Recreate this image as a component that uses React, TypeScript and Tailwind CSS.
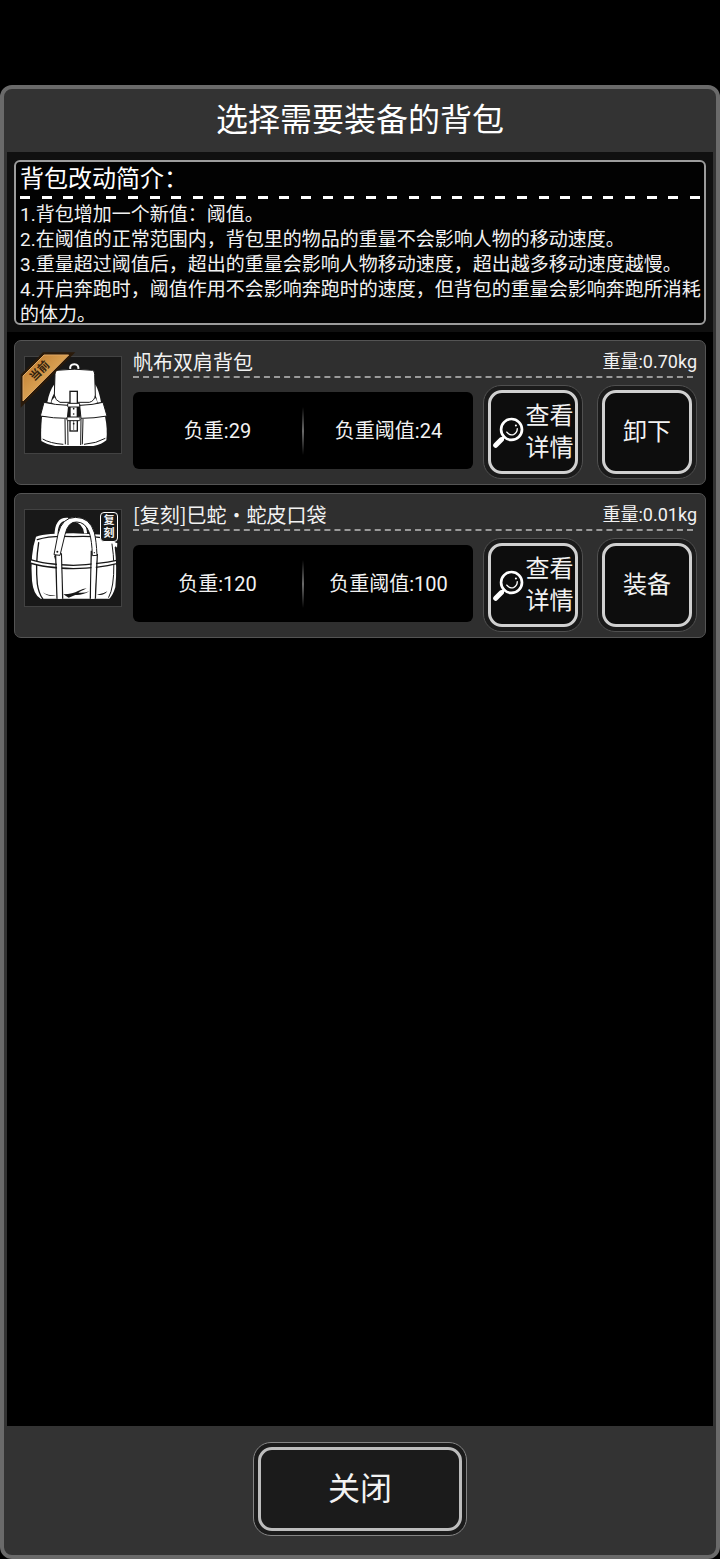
import type { ReactNode } from "react";
import clsx from "clsx";

type Bag = {
  id: string;
  name: string;
  weight: string;
  load: number;
  threshold: number;
  equipped: boolean;
  reissue: boolean;
  art: ReactNode;
};

const NOTES = [
  "1.背包增加一个新值：阈值。",
  "2.在阈值的正常范围内，背包里的物品的重量不会影响人物的移动速度。",
  "3.重量超过阈值后，超出的重量会影响人物移动速度，超出越多移动速度越慢。",
  "4.开启奔跑时，阈值作用不会影响奔跑时的速度，但背包的重量会影响奔跑所消耗的体力。",
];

const BAGS: Bag[] = [
  {
    id: "canvas",
    name: "帆布双肩背包",
    weight: "0.70kg",
    load: 29,
    threshold: 24,
    equipped: true,
    reissue: false,
    art: <BackpackArt />,
  },
  {
    id: "snake",
    name: "[复刻]巳蛇·蛇皮口袋",
    weight: "0.01kg",
    load: 120,
    threshold: 100,
    equipped: false,
    reissue: true,
    art: <DuffelArt />,
  },
];

function BackpackArt() {
  return (
    <svg viewBox="45 68 288 288" className="size-full" aria-hidden="true">
      <path d="M181 106 Q178 90 193 90 Q207 90 205 106" fill="none" stroke="#fff" strokeWidth="6" />
      <path d="M133 150 Q118 170 112 204 L122 205 Q126 185 134 175Z" fill="#fff" />
      <path d="M256 150 Q268 172 273 204 L263 205 Q260 190 255 180Z" fill="#fff" />
      <path d="M124 204 Q128 190 138 188 L252 188 Q260 192 262 204 L250 212 L135 212Z" fill="#fff" />
      <path
        d="M140 108 Q193 101 248 108 Q254 110 254 120 L256 182 Q254 200 238 204 L150 204 Q136 199 133 182 L135 120 Q135 110 140 108Z"
        fill="#fff"
        stroke="#181818"
        strokeWidth="3"
      />
      <path d="M96 248 Q92 290 94 320 Q110 330 136 335 L250 335 Q276 330 289 318 Q293 285 285 246Z" fill="#fff" />
      <path d="M102 204 Q135 212 176 213 L172 252 Q130 252 91 245Z" fill="#fff" stroke="#181818" strokeWidth="3" />
      <path d="M279 204 Q248 212 209 213 L213 252 Q252 252 291 245Z" fill="#fff" stroke="#181818" strokeWidth="3" />
      <g fill="none" stroke="#181818" strokeWidth="3">
        <path d="M165 254 L166 330 M173 254 L174 332 M213 254 L212 332 M219 254 L217 330" />
        <path d="M98 314 Q120 327 160 330 M222 330 Q260 327 286 312" />
      </g>
      <rect x="180" y="171" width="22" height="119" fill="#fff" stroke="#181818" strokeWidth="4" />
      <path d="M191 258 V288" stroke="#777" strokeWidth="3" />
      <rect x="173" y="207" width="36" height="11" rx="2" fill="#fff" stroke="#181818" strokeWidth="3" />
      <rect x="171" y="248" width="39" height="11" rx="2" fill="#fff" stroke="#181818" strokeWidth="3" />
      <path d="M176 218 V248 M207 218 V248" stroke="#181818" strokeWidth="4" />
      <g fill="#181818">
        <circle cx="191" cy="223" r="2.5" />
        <circle cx="191" cy="239" r="2.5" />
        <circle cx="191" cy="268" r="2.5" />
      </g>
    </svg>
  );
}

function DuffelArt() {
  return (
    <svg viewBox="45 68 288 288" className="size-full" aria-hidden="true">
      <path d="M138 146 Q138 92 174 96 M190 97 Q224 104 227 138" fill="none" stroke="#fff" strokeWidth="9" />
      <path
        d="M78 148 Q110 138 190 138 L280 142 Q312 148 318 176 L314 180 Q322 240 316 300 Q308 326 298 334 L92 334 Q70 322 66 280 Q60 200 78 148Z"
        fill="#fff"
      />
      <g fill="none" stroke="#181818" strokeWidth="4" strokeLinecap="round">
        <path d="M82 157 Q120 144 190 148 Q260 144 308 158" />
        <path d="M86 166 Q76 230 82 290 Q86 318 98 334" />
        <path d="M306 170 Q316 235 308 290 Q304 316 296 330" strokeWidth="3" />
      </g>
      <path d="M62 217 Q100 231 190 234 Q270 230 320 219 L320 229 Q270 242 190 244 Q100 241 60 227Z" fill="#fff" stroke="#181818" strokeWidth="4" />
      <path d="M137 200 L141 334 M154 198 L158 334" fill="none" stroke="#181818" strokeWidth="4" />
      <path d="M140 204 H153 L155 334 H144Z" fill="#fff" />
      <path d="M244 190 L241 334 M262 200 L256 334" fill="none" stroke="#181818" strokeWidth="4" />
      <path d="M246 204 H259 L253 334 H243Z" fill="#fff" />
      <path
        d="M132 202 L144 140 Q156 90 196 90 Q240 90 253 136 Q259 160 261 204 L247 205 Q246 160 238 136 Q226 104 200 104 Q174 102 165 142 L150 204Z"
        fill="#fff"
        stroke="#181818"
        strokeWidth="3"
      />
      <g fill="#181818">
        <circle cx="142" cy="193" r="3" />
        <circle cx="253" cy="196" r="2" />
        <path d="M160 321 Q190 320 204 311 Q220 303 230 303 Q212 312 205 316 Q222 318 238 312 Q215 325 196 323 L176 331Z" />
        <path d="M98 315 Q112 325 138 325 Q112 329 98 315Z M261 322 Q280 320 292 312 Q280 327 261 322Z" />
        <path d="M138 204 L136 220 L132 205Z" />
      </g>
      <path d="M304 160 L322 168 L321 181 L312 171Z" fill="#fff" />
    </svg>
  );
}

function CurrentRibbon() {
  return (
    <svg viewBox="30 48 168 174" className="absolute -left-[5px] -top-1.5 h-[58px] w-[56px]" role="img" aria-label="当前">
      <defs>
        <linearGradient id="ribbon" x1="0" y1="0" x2="1" y2="1">
          <stop offset="0" stopColor="#b87327" />
          <stop offset="0.5" stopColor="#d9a052" />
          <stop offset="1" stopColor="#a9641d" />
        </linearGradient>
      </defs>
      <path d="M99 52 H196 L32 218 V119Z" fill="#2a1a0a" />
      <path d="M102 60 H176 L39 198 V123Z" fill="url(#ribbon)" stroke="#dfa866" strokeWidth="3" />
      <text
        x="88"
        y="119"
        transform="rotate(-45 88 107)"
        textAnchor="middle"
        fontSize="34"
        fontWeight="700"
        fill="#33210d"
      >
        当前
      </text>
    </svg>
  );
}

function Magnifier() {
  return (
    <svg viewBox="72 246 92 92" className="size-[31px] shrink-0" fill="none" stroke="#fff" strokeLinecap="round" aria-hidden="true">
      <circle cx="127" cy="283" r="31" strokeWidth="8" />
      <path d="M105 305 L99 311" strokeWidth="8" />
      <path d="M97 313 L80 330" strokeWidth="15" />
      <path d="M113 291 Q121 302 133 298 Q144 293 144 281" strokeWidth="4" />
      <circle cx="140" cy="271" r="3" fill="#fff" stroke="none" />
    </svg>
  );
}

type FrameButtonProps = {
  children: ReactNode;
  large?: boolean;
};

function FrameButton({ children, large }: FrameButtonProps) {
  return (
    <button
      type="button"
      className={clsx(
        "flex h-[94px] shrink-0 rounded-[18px] border bg-[#1b1b1b] p-1",
        large ? "w-[214px] border-[#858585]" : "w-[100px] border-[#505050]"
      )}
    >
      <span
        className={clsx(
          "flex h-full w-full items-center justify-center gap-0.5 rounded-[14px] border-3",
          large ? "border-[#bdbdbd] bg-[#1b1b1b] text-[32px]" : "border-[#d0d0d0] bg-[#0d0d0d] text-2xl leading-8"
        )}
      >
        {children}
      </span>
    </button>
  );
}

function BagCard({ bag }: { bag: Bag }) {
  return (
    <li className="flex gap-[11px] rounded-[7px] border border-[#545454] bg-[#2f2f2f] pb-[5px] pl-[9px] pr-2">
      <div className="relative mt-[15px] size-[98px] shrink-0 border border-[#424242] bg-[#181818]">
        {bag.art}
        {bag.equipped && <CurrentRibbon />}
        {bag.reissue && (
          <span className="absolute right-[3px] top-0.5 w-[18px] rounded-[4px] border border-white bg-[#181818] py-px text-center text-[11px] font-bold leading-[13px]">
            复刻
          </span>
        )}
      </div>

      <div className="min-w-0 flex-1">
        <div className="flex h-[35px] items-end justify-between leading-7">
          <h3 className="font-['Noto_Sans_CJK_SC',sans-serif] text-xl leading-7">{bag.name}</h3>
          <span className="text-lg leading-7">重量:{bag.weight}</span>
        </div>
        <div className="mr-1 border-b-2 border-dashed border-[#9a9a9a]" />
        <div className="mt-[7px] flex items-start">
          <div className="mr-[10px] mt-[7px] flex h-[77px] flex-1 items-center rounded-[6px] bg-black text-xl">
            <span className="flex-1 text-center">负重:{bag.load}</span>
            <span className="h-12 w-0.5 bg-linear-to-b from-transparent via-[#6a6a6a] to-transparent" />
            <span className="flex-1 text-center">负重阈值:{bag.threshold}</span>
          </div>
          <div className="flex gap-[14px]">
            <FrameButton>
              <Magnifier />
              <span className="w-12">查看详情</span>
            </FrameButton>
            <FrameButton>{bag.equipped ? "卸下" : "装备"}</FrameButton>
          </div>
        </div>
      </div>
    </li>
  );
}

export default function App() {
  return (
    <div
      lang="zh-CN"
      className="flex min-h-screen flex-col bg-black pt-[85px] font-[Roboto,'Noto_Sans_CJK_SC',sans-serif] text-[#f2f2f2]"
    >
      <main className="flex flex-1 flex-col rounded-xl border-4 border-[#6a6a6a] bg-[#333]">
        <h1 className="pb-3 pt-[11px] text-center text-[32px] leading-10 text-white">选择需要装备的背包</h1>

        <div className="mx-[3px] flex-1 bg-black">
          <section className="bg-[#101010] px-[7px] pb-[7px] pt-2">
            <div className="rounded-[6px] border-2 border-[#9c9c9c] bg-[#020202] px-1">
              <h2 className="text-2xl leading-[34px] text-white">背包改动简介：</h2>
              <div className="flex justify-between" aria-hidden="true">
                {Array.from({ length: 32 }, (_, i) => (
                  <span key={i} className="h-[3px] w-[10px] bg-white" />
                ))}
              </div>
              <div className="-mb-1 -mr-1 mt-[3px] text-[19px] leading-[25px]">
                {NOTES.map((note) => (
                  <p key={note}>{note}</p>
                ))}
              </div>
            </div>
          </section>

          <ul className="flex flex-col gap-2 px-[7px] pt-2">
            {BAGS.map((bag) => (
              <BagCard key={bag.id} bag={bag} />
            ))}
          </ul>
        </div>

        <footer className="flex justify-center pb-[19px] pt-4">
          <FrameButton large>关闭</FrameButton>
        </footer>
      </main>
    </div>
  );
}
